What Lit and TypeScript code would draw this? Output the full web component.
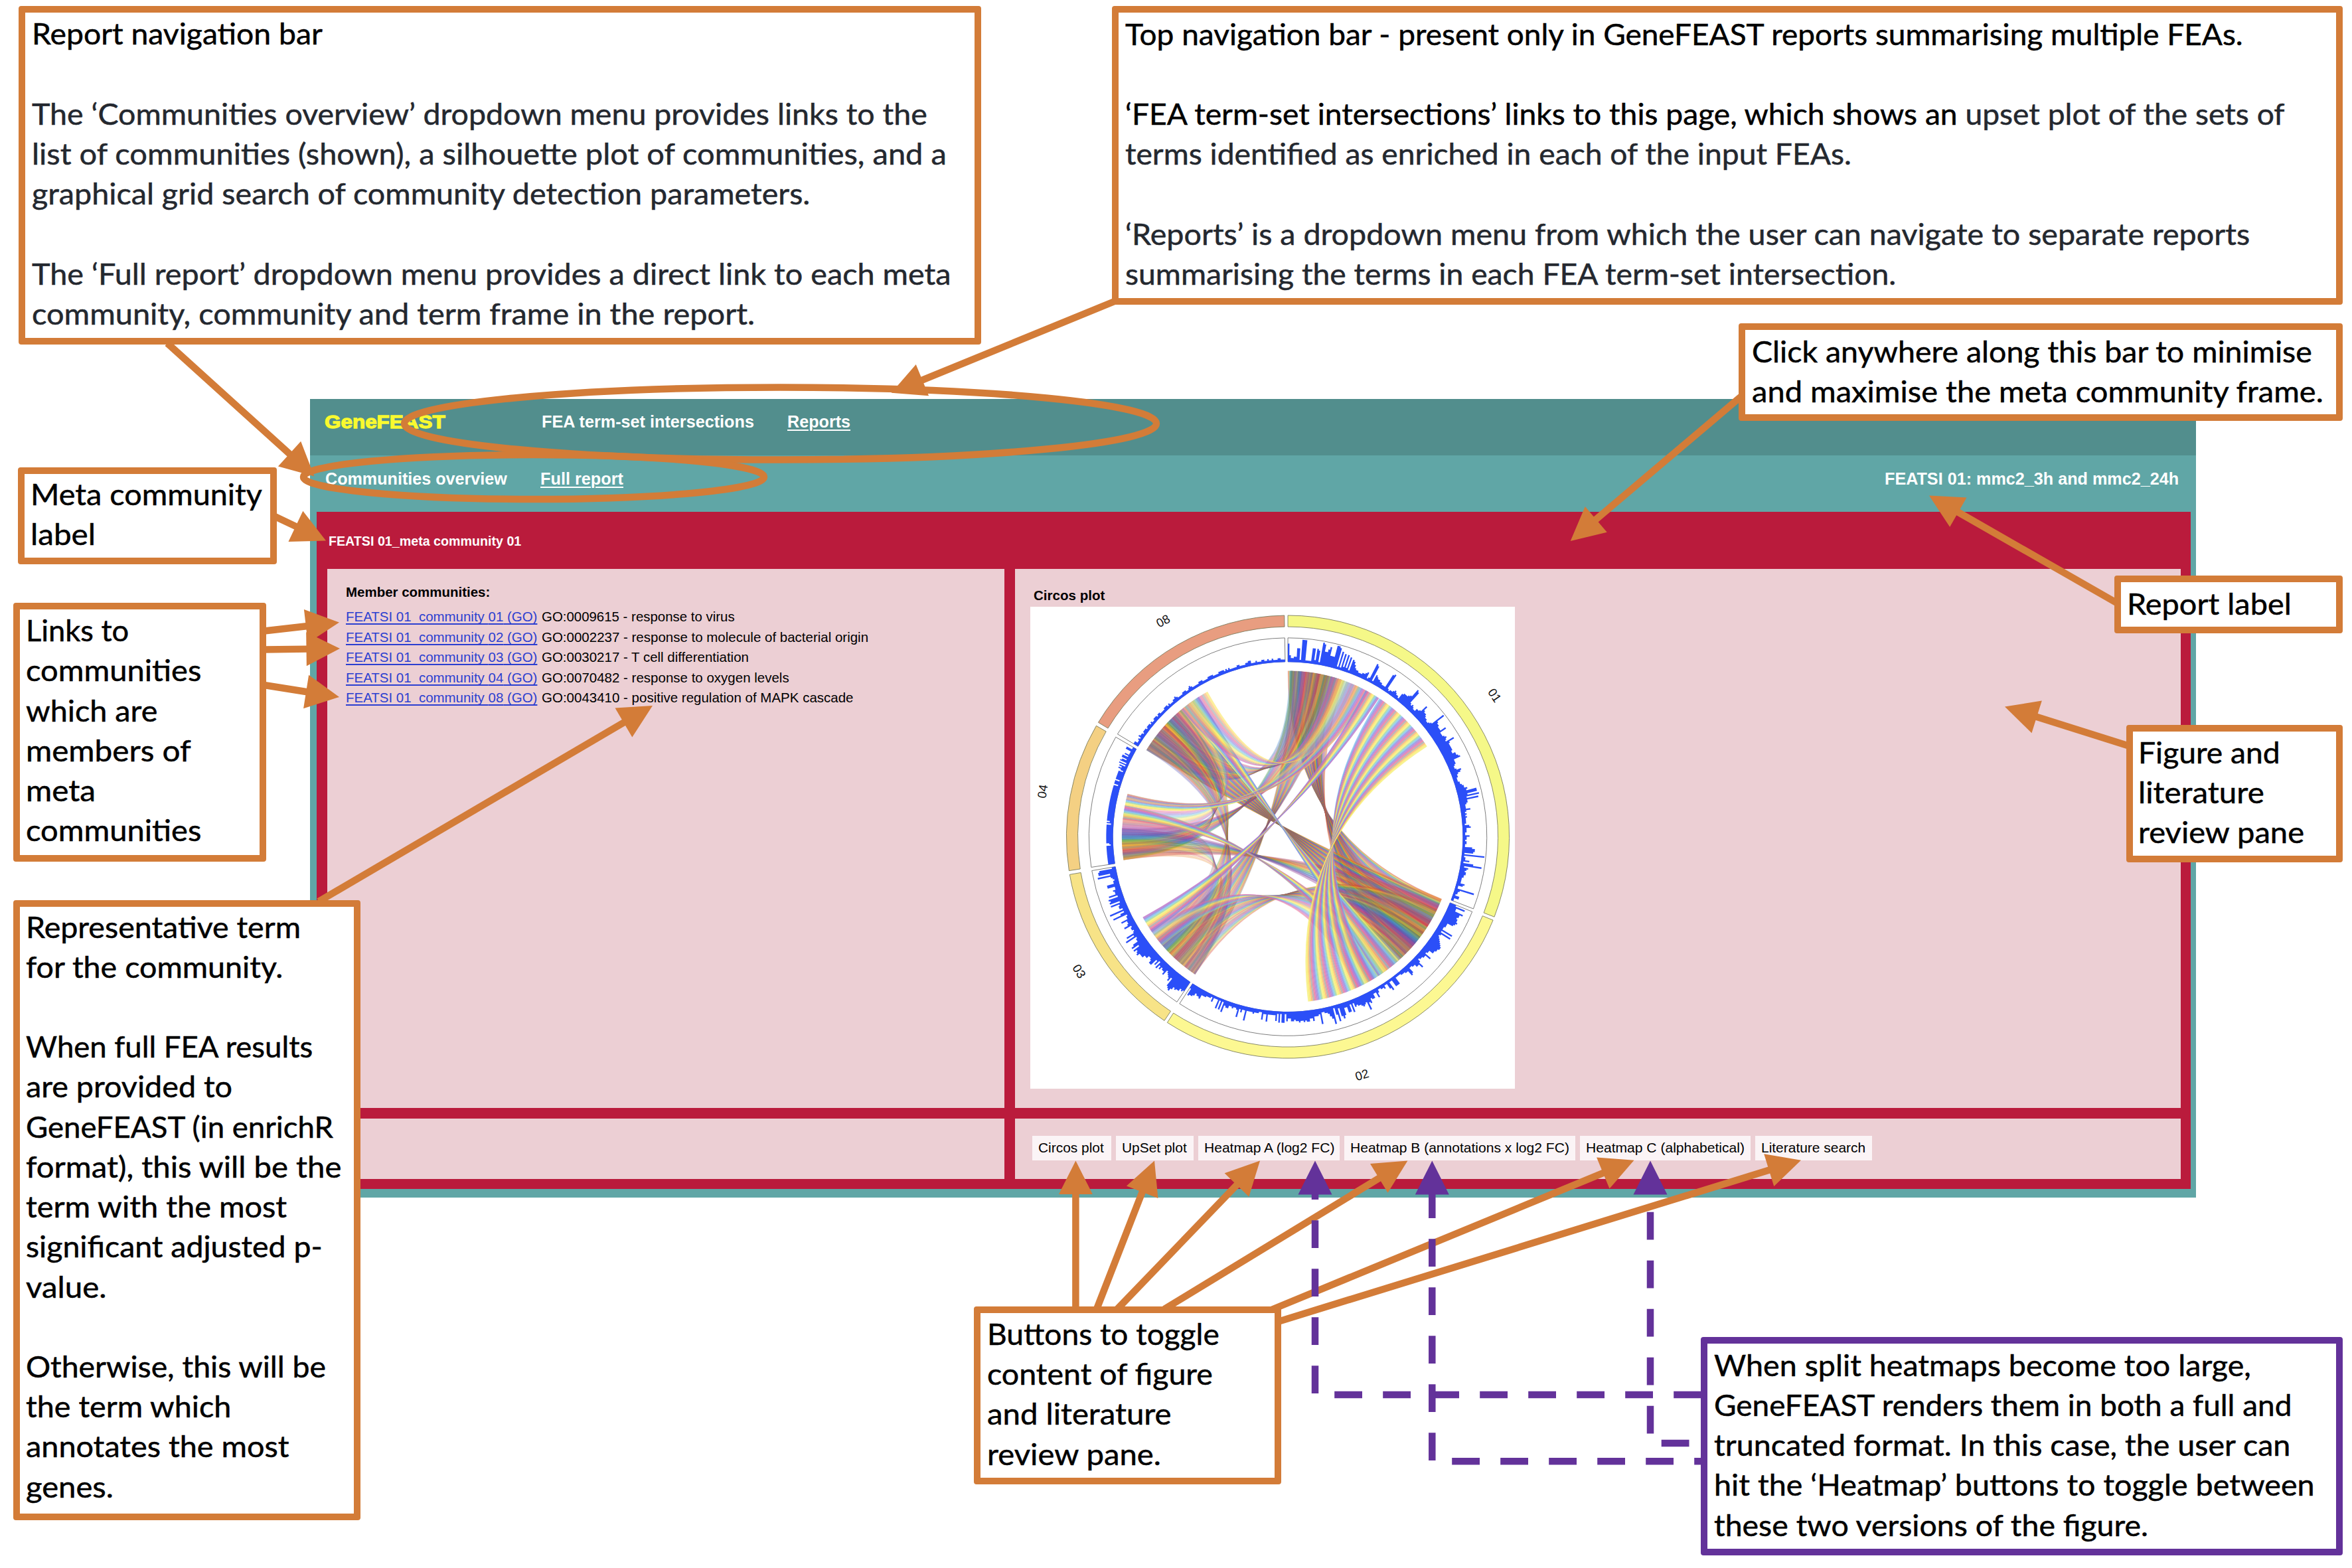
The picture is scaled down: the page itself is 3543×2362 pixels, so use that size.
import { LitElement, html, css, svg } from "lit";
import { customElement, property } from "lit/decorators.js";

/** A single line of text condensed or stretched to an exact width. */
@customElement("fit-line")
class FitLine extends LitElement {
  @property({ type: Number }) w = 0;
  static styles = css`
    :host { display: block; white-space: pre; }
    .ink { display: inline-block; transform-origin: 0 50%; white-space: pre; }
  `;
  render() {
    return html`<span class="ink"><slot></slot></span>`;
  }
  firstUpdated() {
    const ink = this.renderRoot.querySelector(".ink") as HTMLElement;
    const natural = ink.offsetWidth;
    this.style.width = `${this.w}px`;
    if (natural > 0 && this.w > 0) ink.style.transform = `scaleX(${this.w / natural})`;
  }
}

/* ---------- circos plot ---------- */

const CX = 812;
const CY = 813.5;
const pt = (deg: number, r: number) => {
  const t = (deg * Math.PI) / 180;
  return `${(CX + r * Math.sin(t)).toFixed(1)} ${(CY - r * Math.cos(t)).toFixed(1)}`;
};
const band = (a: number, b: number, r0: number, r1: number) => {
  const big = b - a > 180 ? 1 : 0;
  return `M${pt(a, r1)}A${r1} ${r1} 0 ${big} 1 ${pt(b, r1)}L${pt(b, r0)}A${r0} ${r0} 0 ${big} 0 ${pt(a, r0)}Z`;
};

interface Sector { a: number; b: number; fill: string; bars: string; }

/* One hex digit per bin, 0 = empty, f = full track height. */
const SECTORS: Sector[] = [
  {
    a: 0, b: 111.2, fill: "#f5f888",
    bars:
      "c42233991fff1111aa2a91fe99bd777ffe1c1b2b2a1986433222334512dc1654433222cd2122343" +
      "221566678ed434322445a7665443345f988777b6667876c87777766889a555433476433222334" +
      "5576dd6e5d5543336323232222145222114221221168871f122518e2543443322225411d32214411",
  },
  {
    a: 112.1, b: 213, fill: "#fcf892",
    bars:
      "4b55b99899a9844433b3b434567899887744384433248553322673322211116661175" +
      "1132211362255476b5676554528277338a82b61c8643322a344475577676676656644" +
      "6177171622222722611222322229224283223224438171711141222333655467783",
  },
  {
    a: 213.9, b: 260.2, fill: "#f7e387",
    bars: "78799a9bdcb58654375546472638865577999ba9b6b9554c5a4344385448332c63d3554a3a9a39445338833234d4ccb2",
  },
  {
    a: 261.2, b: 300.1, fill: "#f4d083",
    bars: "44444444444444412444444444444444142444444444444444444444444444441444144444441353516165266252226622",
  },
  {
    a: 301.1, b: 359.1, fill: "#e89d80",
    bars: "3311213221222122212112221221111222121112232111122211232111112221111222211112222121211111221111223311121112211211211122111",
  },
];

const histogram = (s: Sector) => {
  const n = s.bars.length;
  const step = (s.b - s.a) / n;
  let d = `M${pt(s.a, 486)}`;
  for (let i = 0; i < n; i++) {
    const r = 489 + (parseInt(s.bars[i], 16) / 15) * 60;
    d += `L${pt(s.a + i * step, r)}L${pt(s.a + (i + 1) * step, r)}`;
  }
  d += `L${pt(s.b, 486)}A486 486 0 0 0 ${pt(s.a, 486)}Z`;
  return d;
};

const SOFT_HUES = ["#f6ae6e", "#fbe55c", "#f6ee74", "#9ed69c", "#78c2ee", "#8a88dc", "#bd70c8", "#ea7096", "#a6a6a6"];
const DEEP_HUES = ["#d8452f", "#e8c022", "#4fa04c", "#3a86c4", "#5450b4", "#97459c", "#cc3b62", "#777777", "#e8892c"];

/* from-start, from-end, to-start, to-end, ribbons, opacity, deep palette flag */
const BUNDLES: number[][] = [
  [0, 17, 112, 137, 54, 0.5, 1],
  [8, 20, 120, 142, 24, 0.35, 1],
  [301.5, 321, 112, 139, 50, 0.5, 1],
  [301.5, 318, 0.5, 19, 22, 0.34, 1],
  [214, 232, 1, 19, 28, 0.36, 1],
  [262, 273, 1, 19, 14, 0.4, 1],
  [262, 273, 114, 134, 9, 0.4, 1],
  [262, 271, 302, 318, 14, 0.36, 1],
  [272, 281, 317, 326, 12, 0.45, 0],
  [214, 230, 116, 142, 26, 0.36, 1],
  [214, 234, 301.5, 320, 26, 0.32, 1],
  [220, 236, 262, 278, 9, 0.3, 1],
  [229, 236, 140, 156, 14, 0.55, 0],
  [276, 281, 143, 151, 11, 0.75, 0],
  [321, 327.5, 138, 147, 13, 0.8, 0],
  [320, 331, 15, 25, 14, 0.6, 0],
  [281, 285, 24, 29, 9, 0.8, 0],
  [235, 241, 28, 33.3, 11, 0.8, 0],
  [18, 26, 283, 285, 9, 0.4, 0],
  [33.5, 57, 148, 173, 44, 0.78, 0],
];

const ribbons = () =>
  BUNDLES.flatMap(([a0, a1, b0, b1, n, o, deep], k) =>
    Array.from({ length: n }, (_, i) => {
      const sa = (a1 - a0) / n;
      const sb = (b1 - b0) / n;
      const p = a0 + i * sa;
      const q = b0 + i * sb;
      const c = `${CX} ${CY}`;
      const hues = deep ? DEEP_HUES : SOFT_HUES;
      const hue = hues[(i + k * 4) % hues.length];
      return svg`<path class="ribbon" d="M${pt(p, 461)}Q${c} ${pt(q + sb, 461)}L${pt(q, 461)}Q${c} ${pt(p + sa, 461)}Z"
        fill=${hue} fill-opacity=${o} stroke=${hue} stroke-opacity=${o * 0.6} />`;
    })
  );

const LABELS: [string, number, number, number][] = [
  ["01", 1387, 420, 56],
  ["02", 1018, 1475, -17],
  ["03", 232, 1187, 58],
  ["04", 130, 687, -81],
  ["08", 465, 213, -28],
];

@customElement("circos-plot")
class CircosPlot extends LitElement {
  static styles = css`
    :host { display: block; }
    svg { display: block; width: 100%; height: 100%; background: #fff; }
    .tag { font: 34px "Liberation Sans", Arial, sans-serif; text-anchor: middle; fill: #111; }
    .frame { fill: none; stroke: #555; stroke-width: 1.4; }
    .bars { fill: #2b4ff8; }
    .arc { stroke: #777a5c; stroke-width: 1.6; }
    .ribbon { stroke-width: 0.7; }
  `;
  render() {
    return html`<svg viewBox="96 174 1347 1339" preserveAspectRatio="none">
      ${ribbons()}
      ${SECTORS.map(
        (s) => svg`
          <path class="arc" d=${band(s.a, s.b, 584, 615.5)} fill=${s.fill} />
          <path class="frame" d=${band(s.a, s.b, 487, 553)} />
          <path class="bars" d=${histogram(s)} />`
      )}
      ${LABELS.map(
        ([t, x, y, r]) => svg`<text class="tag" x=${x} y=${y + 12} transform="rotate(${r} ${x} ${y})">${t}</text>`
      )}
    </svg>`;
  }
}

/* ---------- callouts ---------- */

type Line = [string, number, string?];
interface Note {
  x: number; y: number; r: number; b: number;
  tx: number; base: number;
  kind?: string;
  lines: Line[];
}

/* Each line: text, right edge of the text, optional tone. */
const NOTES: Note[] = [
  {
    x: 28, y: 9, r: 1478, b: 519, tx: 48, base: 67.8,
    lines: [
      ["Report navigation bar", 485],
      ["", 0],
      ["The ‘Communities overview’ dropdown menu provides links to the", 1396, "soft"],
      ["list of communities (shown), a silhouette plot of communities, and a", 1425, "soft"],
      ["graphical grid search of community detection parameters.", 1219, "soft"],
      ["", 0],
      ["The ‘Full report’ dropdown menu provides a direct link to each meta", 1432, "soft"],
      ["community, community and term frame in the report.", 1136, "soft"],
    ],
  },
  {
    x: 1675, y: 9, r: 3529, b: 458.5, tx: 1695, base: 68,
    lines: [
      ["Top navigation bar - present only in GeneFEAST reports summarising multiple FEAs.", 3378],
      ["", 0],
      ["‘FEA term-set intersections’ links to this page, which shows an |upset plot of the sets of", 3441],
      ["terms identified as enriched in each of the input FEAs.", 2788, "soft"],
      ["", 0],
      ["‘Reports’ is a dropdown menu from which the user can navigate to separate reports", 3388, "soft"],
      ["summarising the terms in each FEA term-set intersection.", 2855, "soft"],
    ],
  },
  {
    x: 2619, y: 487, r: 3529, b: 634, tx: 2638.5, base: 546,
    lines: [
      ["Click anywhere along this bar to minimise", 3481],
      ["and maximise the meta community frame.", 3498],
    ],
  },
  {
    x: 26.5, y: 703.5, r: 416.5, b: 850, tx: 46, base: 761.6,
    lines: [["Meta community", 394], ["label", 143.5]],
  },
  {
    x: 19.5, y: 908, r: 401, b: 1298, tx: 38.5, base: 966.6,
    lines: [
      ["Links to", 193],
      ["communities", 302],
      ["which are", 236],
      ["members of", 286],
      ["meta", 142.5],
      ["communities", 302],
    ],
  },
  {
    x: 19.5, y: 1356, r: 542.7, b: 2290, tx: 38.5, base: 1413,
    lines: [
      ["Representative term", 452],
      ["for the community.", 425],
      ["", 0],
      ["When full FEA results", 470],
      ["are provided to", 349],
      ["GeneFEAST (in enrichR", 500],
      ["format), this will be the", 512.5],
      ["term with the most", 430.5],
      ["significant adjusted p-", 484],
      ["value.", 159],
      ["", 0],
      ["Otherwise, this will be", 490],
      ["the term which", 347],
      ["annotates the most", 434],
      ["genes.", 169],
    ],
  },
  { x: 3184.5, y: 867, r: 3529, b: 954, tx: 3203.5, base: 926.3, lines: [["Report label", 3450]] },
  {
    x: 3202.5, y: 1092, r: 3529, b: 1299, tx: 3221, base: 1150.2,
    lines: [["Figure and", 3434], ["literature", 3410], ["review pane", 3470]],
  },
  {
    x: 1467, y: 1968, r: 1930, b: 2235.6, tx: 1486.5, base: 2026.3,
    lines: [["Buttons to toggle", 1835.5], ["content of figure", 1825.5], ["and literature", 1763], ["review pane.", 1748]],
  },
  {
    x: 2562, y: 2014, r: 3529, b: 2342.7, tx: 2582, base: 2073.2, kind: "violet",
    lines: [
      ["When split heatmaps become too large,", 3390],
      ["GeneFEAST renders them in both a full and", 3451.5],
      ["truncated format. In this case, the user can", 3449],
      ["hit the ‘Heatmap’ buttons to toggle between", 3485.5],
      ["these two versions of the figure.", 3234.5],
    ],
  },
];

/* start x, start y, tip x, tip y */
const ARROWS: number[][] = [
  [252, 517, 473.5, 717.5],
  [1680, 453.5, 1342.7, 591.7],
  [2623, 597, 2365.7, 815],
  [412, 777, 491, 814.5],
  [398, 950.5, 511, 937.5],
  [398, 978.5, 512, 977],
  [398, 1032, 511, 1050],
  [480, 1358, 983, 1063],
  [3190, 909, 2906, 746.6],
  [3208, 1124, 3020, 1064.6],
  [1620.4, 1972, 1620.4, 1748.6],
  [1652, 1972, 1739, 1748.6],
  [1683, 1972, 1898, 1748.6],
  [1754, 1972, 2120.4, 1748.6],
  [1908, 1976, 2461.5, 1747.8],
  [1925, 1991, 2713, 1747.8],
];

const arrow = ([x0, y0, x1, y1]: number[]) => {
  const len = Math.hypot(x1 - x0, y1 - y0);
  const ux = (x1 - x0) / len;
  const uy = (y1 - y0) / len;
  const bx = x1 - ux * 50.5;
  const by = y1 - uy * 50.5;
  return svg`<line x1=${x0} y1=${y0} x2=${bx + ux * 3} y2=${by + uy * 3} />
    <path class="head" d="M${x1} ${y1}L${bx - uy * 25.5} ${by + ux * 25.5}L${bx + uy * 25.5} ${by - ux * 25.5}Z" />`;
};

const MEMBERS = [
  ["01", "GO:0009615 - response to virus", 291],
  ["02", "GO:0002237 - response to molecule of bacterial origin", 492],
  ["03", "GO:0030217 - T cell differentiation", 312],
  ["04", "GO:0070482 - response to oxygen levels", 373],
  ["08", "GO:0043410 - positive regulation of MAPK cascade", 469],
] as const;

const BUTTONS: [string, number, number][] = [
  ["Circos plot", 119, 99],
  ["UpSet plot", 117, 98],
  ["Heatmap A (log2 FC)", 213.5, 196],
  ["Heatmap B (annotations x log2 FC)", 348.5, 330],
  ["Heatmap C (alphabetical)", 257, 239],
  ["Literature search", 176, 157],
];

@customElement("app-root")
class AppRoot extends LitElement {
  static styles = css`
    :host { display: block; width: 3543px; height: 2362px; overflow: hidden; }
    .stage {
      position: relative; width: 3543px; height: 2362px; box-sizing: border-box;
      padding: 600.5px 0 0 467px; background: #fff;
      font-family: "Liberation Sans", Arial, sans-serif; color: #000;
    }
    .app { width: 2840.5px; height: 1203.5px; background: #60a6a6; display: flex; flex-direction: column; }
    .nav { display: flex; align-items: center; box-sizing: border-box; color: #fff; font-weight: bold; font-size: 25.7px; flex: none; }
    .top { height: 85.5px; background: #528e8d; padding: 0 0 15px 22px; }
    .sub { height: 85px; padding: 0 25.5px 14px 22.5px; }
    .brand { color: #f9f92f; font-size: 28.5px; margin-right: 144.5px; -webkit-text-stroke: 1.3px #f9f92f; }
    .gap1 { margin-right: 50px; }
    .gap2 { margin-right: 50.5px; }
    .under { text-decoration: underline; text-decoration-thickness: 2px; text-underline-offset: 3px; }
    .push { margin-left: auto; }
    .meta { margin: 0 7.5px 13px 10px; flex: 1; background: #ba1b3c; display: flex; flex-direction: column; }
    .bar { height: 86px; box-sizing: border-box; padding: 2px 0 0 17.5px; display: flex; align-items: center; color: #fff; font-weight: bold; font-size: 19.6px; flex: none; }
    .grid {
      display: grid; grid-template-columns: 1020.5px 1fr; grid-template-rows: 812px 91px;
      column-gap: 15.7px; row-gap: 15.5px; padding: 0 15px 0 15.5px;
    }
    .pane { background: #eccfd4; box-sizing: border-box; font-size: 20.3px; line-height: 30.6px; }
    .members { padding: 19.5px 0 0 28px; }
    .title { font-weight: bold; }
    .members .title { margin-bottom: 7px; }
    .row { display: flex; gap: 6.5px; }
    .link { color: #2c3fd0; text-decoration: underline; text-decoration-thickness: 1.8px; text-underline-offset: 2.5px; text-decoration-skip-ink: none; }
    .figure { padding: 25px 0 0 23.3px; }
    .figure .title { margin: 0 0 1.4px 5.2px; }
    .plot { width: 730px; height: 725.7px; }
    .buttons { display: flex; gap: 6.8px; padding: 26.4px 0 0 26.3px; line-height: 37.2px; }
    .btn { background: #fbf4f6; height: 37.2px; box-sizing: border-box; padding-left: 9.3px; flex: none; }
    .ink { position: absolute; left: 0; top: 0; width: 3543px; height: 2362px; }
    .ink line { stroke: #d37c38; stroke-width: 10.5; }
    .ink .head { fill: #d37c38; }
    .ink ellipse { fill: none; stroke: #d37c38; stroke-width: 10.5; }
    .ink .dash { fill: none; stroke: #63329a; stroke-width: 10.5; stroke-dasharray: 41.8 31.2; }
    .ink .vhead { fill: #63329a; }
    .note {
      position: absolute; box-sizing: border-box; background: #fff;
      border: 10.3px solid #d37c38; border-radius: 4px;
      font: 44.5px/60.22px Lato, "Open Sans", sans-serif; color: #000;
      -webkit-text-stroke: 0.5px currentColor;
    }
    .violet { border-color: #63329a; }
    .line { height: 60.22px; }
    .soft { color: #24282f; }
  `;

  note(n: Note) {
    const inX = n.tx - n.x - 10;
    const inY = n.base - 47.4 - n.y - 10;
    return html`<div class="note ${n.kind ?? ""}"
      style="left:${n.x}px;top:${n.y}px;width:${n.r - n.x}px;height:${n.b - n.y}px">
      <div style="margin:${inY}px 0 0 ${inX}px">
        ${n.lines.map(([text, end, tone]) => {
          if (!text) return html`<div class="line"></div>`;
          const [head, tail] = text.split("|");
          return html`<fit-line class="line ${tone ?? ""}" .w=${end - n.tx + 1}>${head}${tail
            ? html`<span class="soft">${tail}</span>`
            : ""}</fit-line>`;
        })}
      </div>
    </div>`;
  }

  render() {
    return html`<div class="stage">
      <div class="app">
        <div class="nav top">
          <fit-line class="brand" .w=${182}>GeneFEAST</fit-line>
          <fit-line class="gap1" .w=${320}>FEA term-set intersections</fit-line>
          <fit-line .w=${95}><span class="under">Reports</span></fit-line>
        </div>
        <div class="nav sub">
          <fit-line class="gap2" .w=${274}>Communities overview</fit-line>
          <fit-line .w=${125}><span class="under">Full report</span></fit-line>
          <fit-line class="push" .w=${443}>FEATSI 01: mmc2_3h and mmc2_24h</fit-line>
        </div>
        <div class="meta">
          <div class="bar"><fit-line .w=${290}>FEATSI 01_meta community 01</fit-line></div>
          <div class="grid">
            <div class="pane members">
              <fit-line class="title" .w=${217}>Member communities:</fit-line>
              ${MEMBERS.map(
                ([id, term, w]) => html`<div class="row">
                  <fit-line .w=${288.5}><a class="link">FEATSI 01_community ${id} (GO)</a></fit-line>
                  <fit-line .w=${w}>${term}</fit-line>
                </div>`
              )}
            </div>
            <div class="pane figure">
              <fit-line class="title" .w=${107.5}>Circos plot</fit-line>
              <circos-plot class="plot"></circos-plot>
            </div>
            <div class="pane"></div>
            <div class="pane buttons">
              ${BUTTONS.map(
                ([label, w, ink]) => html`<div class="btn" style="width:${w}px"><fit-line .w=${ink}>${label}</fit-line></div>`
              )}
            </div>
          </div>
        </div>
      </div>
      <svg class="ink" viewBox="0 0 3543 2362">
        ${ARROWS.map(arrow)}
        <ellipse cx="1175.5" cy="638" rx="566.5" ry="54.5" />
        <ellipse cx="804" cy="718.5" rx="347" ry="33.5" />
        <path class="dash" d="M2563 2101H1981V1795" />
        <path class="dash" d="M2594 2201.3H2157.3V1795" />
        <path class="dash" d="M2544.5 2174H2486V1795" />
        ${[1981, 2157.3, 2486].map(
          (x) => svg`<path class="vhead" d="M${x} 1748.4L${x - 25.5} 1799.5H${x + 25.5}Z" />`
        )}
      </svg>
      ${NOTES.map((n) => this.note(n))}
    </div>`;
  }
}
